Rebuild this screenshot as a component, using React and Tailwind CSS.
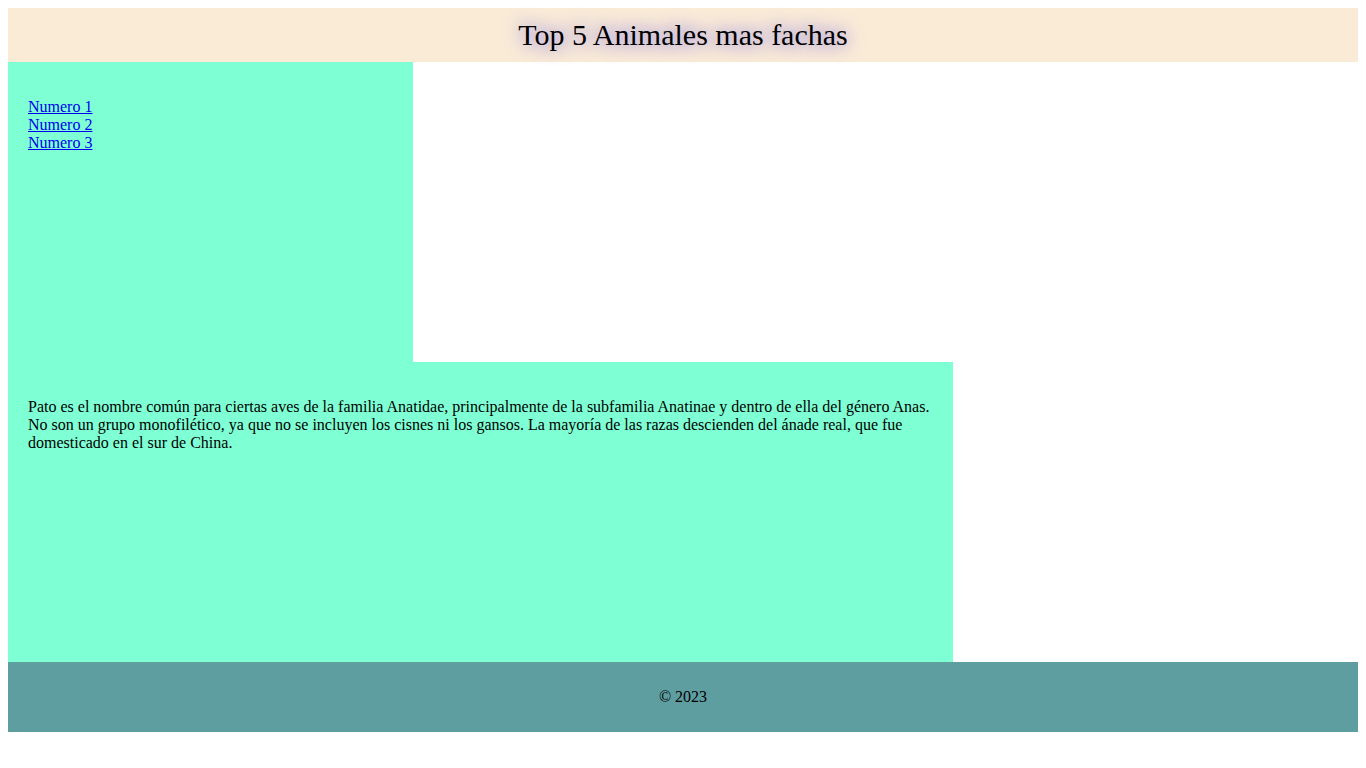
import React from 'react';

const App = () => {
  return (
    <div className="m-2 font-['Liberation_Serif',serif] text-base leading-[18px] text-black">
      <header className="h-[54px] bg-[#FAEBD7] flex items-center justify-center">
        <h1 className="text-[30px] leading-[36px] [text-shadow:0_0_18px_#5b50e0]">Top 5 Animales mas fachas</h1>
      </header>
      <nav className="w-[30%] h-[300px] bg-[#7FFFD4] p-5">
        <ul className="my-4 list-none">
          <li><a href="#" className="text-[#0000EE] underline">Numero 1</a></li>
          <li><a href="#" className="text-[#0000EE] underline">Numero 2</a></li>
          <li><a href="#" className="text-[#0000EE] underline">Numero 3</a></li>
        </ul>
      </nav>
      <main className="w-[70%] h-[300px] bg-[#7FFFD4] p-5">
        <p className="my-4">
          Pato es el nombre común para ciertas aves de la familia Anatidae, principalmente de la subfamilia Anatinae y dentro de ella del género Anas. No son un grupo monofilético, ya que no se incluyen los cisnes ni los gansos. La mayoría de las razas descienden del ánade real, que fue domesticado en el sur de China.
        </p>
      </main>
      <footer className="bg-[#5F9EA0] py-2.5 text-center">
        <p className="my-4">© 2023</p>
      </footer>
    </div>
  );
};

export default App;
